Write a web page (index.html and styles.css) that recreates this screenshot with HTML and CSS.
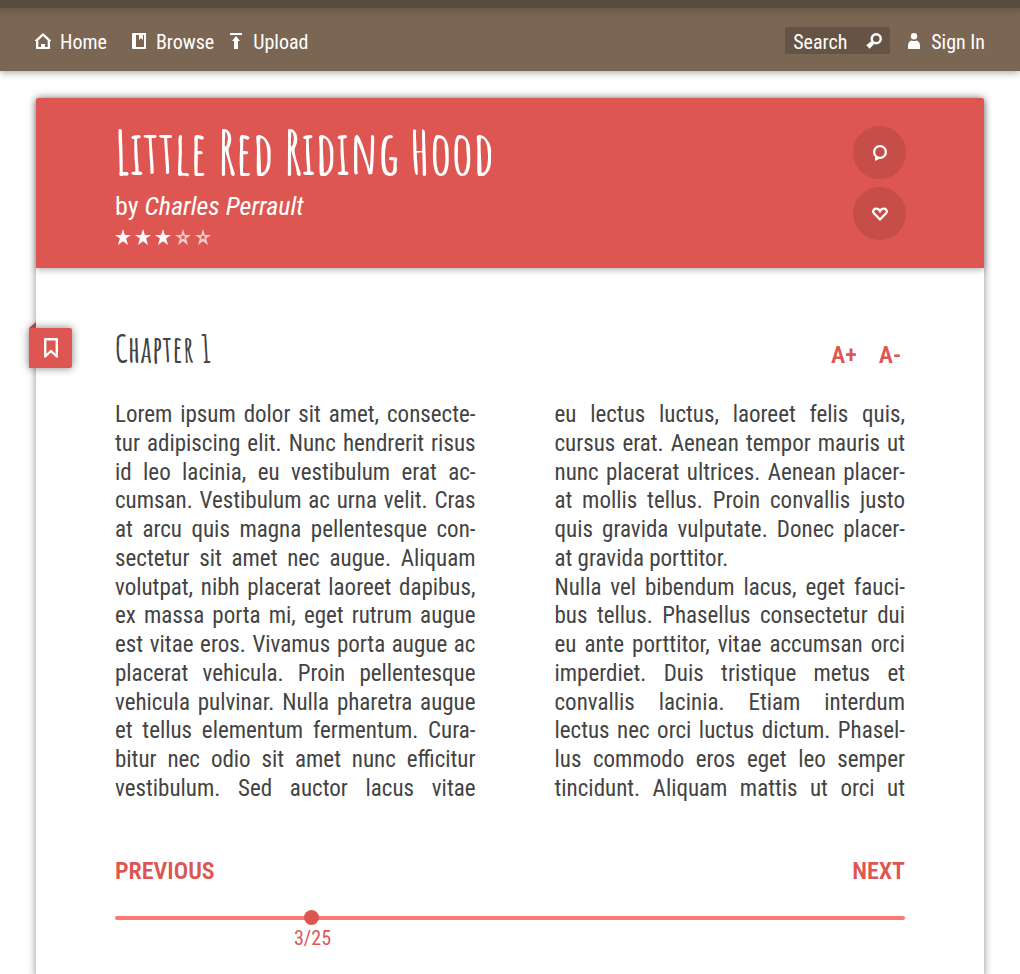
FILE: index.html
```
<!DOCTYPE html>
<html lang="en">
<head>
<meta charset="utf-8">
<meta name="viewport" content="width=device-width, initial-scale=1">
<title>Little Red Riding Hood</title>
<link rel="stylesheet" href="styles.css">
</head>
<body>
<header class="topbar">
  <nav class="nav">
    <a class="nav-link" href="#home">
      <svg class="icon" viewBox="0 0 16 16" aria-hidden="true"><path fill-rule="evenodd" d="M8 0 16 7.300V8h-1v8H1V8H0v-.7zM8 3 3.300 7.400V14H6v-3h4v3h2.700V7.400z"/></svg>
      <span class="nav-text">Home</span>
    </a>
    <a class="nav-link" href="#browse">
      <svg class="icon" viewBox="0 0 16 16" aria-hidden="true"><path fill-rule="evenodd" d="M2 0h13v16H2q-1 0-1-1V1q0-1 1-1zM5 2v12h8V2h-1v5l-2-2-2 2V2z"/></svg>
      <span class="nav-text">Browse</span>
    </a>
    <a class="nav-link upload" href="#upload">
      <svg class="icon" viewBox="0 0 16 16" aria-hidden="true"><path d="M2 0h12v2H2zM8 3l4 5h-2v8H6V8H4z"/></svg>
      <span class="nav-text">Upload</span>
    </a>
  </nav>
  <div class="tools">
    <form class="search" role="search">
      <input class="search-input" type="text" placeholder="Search" aria-label="Search">
      <button class="search-button" type="submit" aria-label="Search">
        <svg class="icon" viewBox="0 0 16 16" aria-hidden="true"><circle cx="10.200" cy="5.800" r="4.500" fill="none" stroke="currentColor" stroke-width="2.400"/><path d="M5.200 8.200 8 11l-4.300 4.700L.3 12.300z"/></svg>
      </button>
    </form>
    <a class="nav-link" href="#signin">
      <svg class="icon" viewBox="0 0 16 16" aria-hidden="true"><circle cx="8" cy="3.200" r="3.200"/><path d="M2 16v-3.500C2 9.500 4 8 5.500 7.500q2.500 1.200 5 0C12 8 14 9.500 14 12.500V16z"/></svg>
      <span class="nav-text">Sign In</span>
    </a>
  </div>
</header>

<main class="book">
  <header class="book-header">
    <div class="book-info">
      <h1 class="title">Little Red Riding Hood</h1>
      <p class="author">by <em>Charles Perrault</em></p>
      <div class="rating" role="img" aria-label="3 out of 5 stars">
        <svg class="star" viewBox="0 0 16 16"><path d="m8 0 1.900 5.900H16l-4.900 3.700L13 16l-5-3.800L3 16l1.900-6.400L0 5.900h6.100z"/></svg>
        <svg class="star" viewBox="0 0 16 16"><path d="m8 0 1.900 5.900H16l-4.900 3.700L13 16l-5-3.800L3 16l1.900-6.400L0 5.900h6.100z"/></svg>
        <svg class="star" viewBox="0 0 16 16"><path d="m8 0 1.900 5.900H16l-4.900 3.700L13 16l-5-3.800L3 16l1.900-6.400L0 5.900h6.100z"/></svg>
        <svg class="star star-empty" viewBox="0 0 16 16"><path fill-rule="evenodd" d="m8 0 1.900 5.900H16l-4.900 3.700L13 16l-5-3.800L3 16l1.900-6.400L0 5.900h6.100zm0 5.800-.9 1.700H5.400l1.300 1.300-.5 2L8 9.600l1.800 1.200-.5-2 1.300-1.300H8.900z"/></svg>
        <svg class="star star-empty" viewBox="0 0 16 16"><path fill-rule="evenodd" d="m8 0 1.900 5.900H16l-4.900 3.700L13 16l-5-3.800L3 16l1.900-6.400L0 5.900h6.100zm0 5.800-.9 1.700H5.400l1.300 1.300-.5 2L8 9.600l1.800 1.200-.5-2 1.300-1.300H8.900z"/></svg>
      </div>
    </div>
    <div class="actions">
      <button class="round" type="button" aria-label="Comment">
        <svg class="icon" viewBox="0 0 16 16" aria-hidden="true"><circle cx="8" cy="7" r="5.900" fill="none" stroke="currentColor" stroke-width="2.200"/><path d="M3 10.500V16l5-2.500z"/></svg>
      </button>
      <button class="round" type="button" aria-label="Favourite">
        <svg class="icon" viewBox="0 0 16 16" aria-hidden="true"><path fill="none" stroke="currentColor" stroke-width="2.200" d="M8 13.500 1.900 7.300C.4 5.500 1.500 2.600 4.200 2.600 6 2.600 7.300 3.600 8 5c.7-1.400 2-2.400 3.800-2.400 2.700 0 3.800 2.900 2.300 4.700z"/></svg>
      </button>
    </div>
  </header>

  <button class="bookmark" type="button" aria-label="Bookmark">
    <svg class="bookmark-icon" viewBox="0 0 14 20" aria-hidden="true"><path d="M1.200 1.200h11.600v17.300L7 13l-5.800 5.500z" fill="none" stroke="currentColor" stroke-width="2.400" stroke-linejoin="round"/></svg>
  </button>

  <section class="chapter">
    <div class="chapter-head">
      <h2 class="chapter-title">Chapter 1</h2>
      <div class="sizes">
        <button class="text-button" type="button">A+</button>
        <button class="text-button" type="button">A-</button>
      </div>
    </div>
    <div class="columns">
      <div class="column">
        <p class="full">Lorem ipsum dolor sit amet, consecte-<br>tur adipiscing elit. Nunc hendrerit risus<br>id leo lacinia, eu vestibulum erat ac-<br>cumsan. Vestibulum ac urna velit. Cras<br>at arcu quis magna pellentesque con-<br>sectetur sit amet nec augue. Aliquam<br>volutpat, nibh placerat laoreet dapibus,<br>ex massa porta mi, eget rutrum augue<br>est vitae eros. Vivamus porta augue ac<br>placerat vehicula. Proin pellentesque<br>vehicula pulvinar. Nulla pharetra augue<br>et tellus elementum fermentum. Cura-<br>bitur nec odio sit amet nunc efficitur<br>vestibulum. Sed auctor lacus vitae</p>
      </div>
      <div class="column">
        <p class="full">eu lectus luctus, laoreet felis quis,<br>cursus erat. Aenean tempor mauris ut<br>nunc placerat ultrices. Aenean placer-<br>at mollis tellus. Proin convallis justo<br>quis gravida vulputate. Donec placer-</p>
        <p>at gravida porttitor.</p>
        <p class="full">Nulla vel bibendum lacus, eget fauci-<br>bus tellus. Phasellus consectetur dui<br>eu ante porttitor, vitae accumsan orci<br>imperdiet. Duis tristique metus et<br>convallis lacinia. Etiam interdum<br>lectus nec orci luctus dictum. Phasel-<br>lus commodo eros eget leo semper<br>tincidunt. Aliquam mattis ut orci ut</p>
      </div>
    </div>
    <div class="pager">
      <button class="text-button" type="button">PREVIOUS</button>
      <button class="text-button" type="button">NEXT</button>
    </div>
    <div class="progress">
      <input class="slider" id="page" type="range" min="0" max="1000" value="244" aria-label="Page" aria-valuetext="3/25">
      <output class="page-number" for="page">3/25</output>
    </div>
  </section>
</main>
</body>
</html>
```
FILE: styles.css
```
* {
  box-sizing: border-box;
}

body {
  margin: 0;
  background: #fff;
  color: #434343;
  font-family: "Roboto Condensed", Roboto, sans-serif;
}

h1, h2, p {
  margin: 0;
  font-weight: 400;
}

button {
  border: 0;
  padding: 0;
  background: none;
  color: inherit;
  font: inherit;
  cursor: pointer;
}

.icon {
  display: block;
  flex: none;
  width: 16px;
  height: 16px;
  fill: currentColor;
}

.topbar {
  display: flex;
  justify-content: space-between;
  align-items: center;
  padding: 19px 35px 17px;
  border-top: 8px solid #574c3f;
  background: linear-gradient(#6b594a, #7b6654 8px);
  box-shadow: 0 1px 8px rgba(0, 0, 0, 0.4);
  color: #fff;
  font-size: 20px;
  line-height: 24px;
}

.nav {
  display: flex;
  gap: 24px;
}

.nav-link {
  display: flex;
  align-items: center;
  gap: 9px;
  color: #fff;
  text-decoration: none;
}

.nav-text {
  padding-top: 2px;
}

.upload {
  margin-left: -10px;
}

.tools {
  display: flex;
  align-items: center;
  gap: 16px;
}

.search {
  display: flex;
  align-items: center;
  width: 105px;
  height: 27px;
  padding: 0 8px;
  border-radius: 2px;
  background: #655445;
}

.search-input {
  flex: 1;
  min-width: 0;
  border: 0;
  padding: 2px 0 0;
  background: none;
  color: #fff;
  font: inherit;
}

.search-input::placeholder {
  color: #fff;
  opacity: 1;
}

.book {
  position: relative;
  margin: 27px 36px 0;
  min-height: calc(100vh - 98px);
  border-radius: 2px 2px 0 0;
  background: #fff;
  box-shadow: 0 0 8px rgba(0, 0, 0, 0.45);
}

.book-header {
  display: flex;
  justify-content: space-between;
  align-items: flex-start;
  padding: 16px 78px 14px 79px;
  border-radius: 2px 2px 0 0;
  background: #dd5651;
  box-shadow: 0 2px 6px rgba(0, 0, 0, 0.3);
  color: #fff;
}

.title {
  font-family: "Amatic SC", "Roboto Condensed", Roboto, sans-serif;
  font-weight: 700;
  font-size: 60px;
  line-height: 76px;
  white-space: nowrap;
}

.author {
  font-size: 26px;
  line-height: 32px;
}

.rating {
  display: flex;
  gap: 4px;
  padding: 7px 0 9px;
}

.star {
  width: 16px;
  height: 16px;
  fill: #fff;
}

.star-empty {
  opacity: 0.7;
}

.actions {
  display: grid;
  gap: 8px;
  padding-top: 12px;
}

.round {
  display: grid;
  place-items: center;
  width: 53px;
  height: 53px;
  border-radius: 50%;
  background: #c74d49;
}

.bookmark {
  position: absolute;
  top: 230px;
  left: -7px;
  display: grid;
  place-items: center;
  width: 43px;
  height: 40px;
  border-radius: 0 2px 2px 0;
  background: #dd5651;
  box-shadow: 0 0 8px rgba(0, 0, 0, 0.5);
  color: #fff;
}

.bookmark::before {
  content: "";
  position: absolute;
  top: -6px;
  left: 0;
  border-left: 7px solid transparent;
  border-bottom: 6px solid #b04541;
}

.bookmark-icon {
  width: 14px;
  height: 20px;
}

.chapter {
  padding: 56px 79px 24px;
}

.chapter-head {
  display: flex;
  justify-content: space-between;
  align-items: flex-end;
}

.chapter-title {
  font-family: "Amatic SC", "Roboto Condensed", Roboto, sans-serif;
  font-weight: 700;
  font-size: 38px;
  line-height: 48px;
}

.sizes {
  display: flex;
  gap: 22px;
  padding: 0 4px 3px 0;
}

.text-button {
  color: #dd5651;
  font-weight: 600;
  font-size: 24px;
  line-height: 28px;
}

.columns {
  display: grid;
  grid-template-columns: minmax(0, 36fr) minmax(0, 35fr);
  gap: 79px;
  padding-top: 29px;
  font-size: 23px;
  line-height: 1.25;
}

.column {
  white-space: nowrap;
}

.full {
  text-align: justify;
  text-align-last: justify;
}

.pager {
  display: flex;
  justify-content: space-between;
  padding-top: 53px;
}

.progress {
  position: relative;
  padding: 25px 0 28px;
}

.slider {
  appearance: none;
  display: block;
  width: 100%;
  height: 16px;
  margin: 0;
  background: none;
}

.slider::-webkit-slider-runnable-track {
  height: 4px;
  border-radius: 2px;
  background: #f87b73;
}

.slider::-webkit-slider-thumb {
  appearance: none;
  width: 15px;
  height: 15px;
  margin-top: -6px;
  border-radius: 50%;
  background: #dd5651;
}

.page-number {
  position: absolute;
  top: 41px;
  left: 25%;
  transform: translateX(-50%);
  color: #dd5651;
  font-size: 20px;
  line-height: 24px;
}
```
